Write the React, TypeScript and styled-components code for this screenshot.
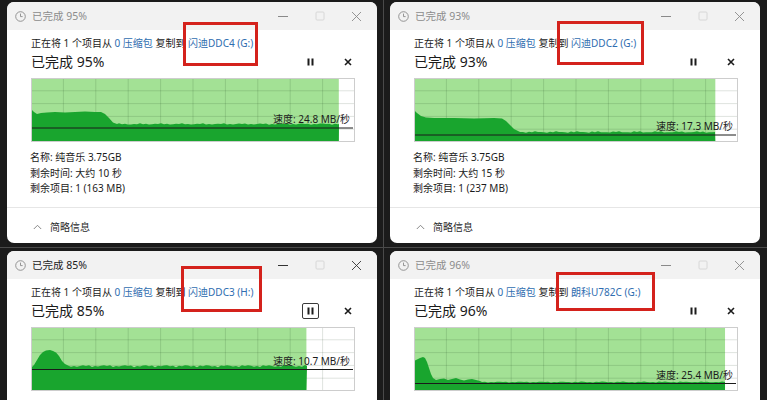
import React from "react";
import styled, { createGlobalStyle } from "styled-components";

type Pt = [number, number];

const GW = 324;
const GH = 64;

const GlobalStyle = createGlobalStyle`
  html, body { margin: 0; padding: 0; background: #1a1a1a; }
  body {
    width: 767px; height: 400px; overflow: hidden;
    font-family: "Noto Sans", "Noto Sans CJK SC", sans-serif;
    -webkit-font-smoothing: antialiased;
  }
`;

const Page = styled.div`
  display: grid;
  grid-template-columns: 370px 370px;
  grid-template-rows: 241px 149px;
  column-gap: 13px;
  row-gap: 8px;
  padding: 2px 0 0 7px;
  height: 400px;
  box-sizing: border-box;
  overflow: hidden;
  background:
    linear-gradient(#4a4a4a, #4a4a4a) 383px 0 / 1px 100% no-repeat,
    linear-gradient(#4a4a4a, #4a4a4a) 0 247px / 100% 1px no-repeat,
    #1b1b1b;
`;

const Window = styled.div<{ $cropped?: boolean }>`
  position: relative;
  display: flex;
  flex-direction: column;
  height: ${(p) => (p.$cropped ? "149px" : "241px")};
  background: #ffffff;
  border-radius: ${(p) => (p.$cropped ? "7px 7px 0 0" : "7px")};
  overflow: hidden;
`;

const TitleBar = styled.div`
  height: 28px;
  flex-shrink: 0;
  display: flex;
  align-items: center;
  padding-left: 8px;
  background: #f2f2f2;
`;

const TitleText = styled.span<{ $active?: boolean }>`
  margin-left: 6px;
  font-size: 10.5px;
  line-height: 14px;
  color: ${(p) => (p.$active ? "#1b1b1b" : "#8c8c8c")};
`;

const TitleControls = styled.div`
  margin-left: auto;
  display: flex;
  padding-right: 2px;
`;

const CtrlButton = styled.div`
  width: 37px;
  height: 28px;
  display: flex;
  align-items: center;
  justify-content: center;
`;

const Body = styled.div`
  display: flex;
  flex-direction: column;
  padding: 6px 22px 0 24px;
`;

const ContentLine = styled.div`
  font-size: 10px;
  line-height: 14px;
  color: #1b1b1b;
  white-space: nowrap;
`;

const Link = styled.span`
  color: #2f6db0;
`;

const BigRow = styled.div`
  display: flex;
  align-items: center;
  height: 20px;
  margin-top: 2px;
`;

const BigText = styled.span`
  font-size: 14px;
  line-height: 20px;
  color: #1b1b1b;
`;

const RowControls = styled.div`
  margin-left: auto;
  margin-right: -2px;
  display: flex;
  align-items: center;
  gap: 20px;
`;

const PauseButton = styled.div<{ $focused?: boolean }>`
  width: 17px;
  height: 16px;
  box-sizing: border-box;
  display: flex;
  align-items: center;
  justify-content: center;
  border: 1px solid ${(p) => (p.$focused ? "#3a3a3a" : "transparent")};
  border-radius: 2px;
`;

const StopButton = styled.div`
  width: 18px;
  height: 16px;
  display: flex;
  align-items: center;
  justify-content: center;
`;

const GraphFrame = styled.div`
  position: relative;
  width: ${GW}px;
  height: ${GH}px;
  margin-top: 6px;
`;

const SpeedLabel = styled.span<{ $top: number }>`
  position: absolute;
  right: 5px;
  top: ${(p) => p.$top}px;
  font-size: 10px;
  line-height: 14px;
  color: #1b1b1b;
  white-space: nowrap;
`;

const Info = styled.div`
  margin-top: 8px;
  margin-left: -1px;
  display: flex;
  flex-direction: column;
`;

const InfoLine = styled.div`
  font-size: 10px;
  line-height: 15.5px;
  color: #1b1b1b;
  white-space: nowrap;
`;

const Footer = styled.div`
  margin-top: auto;
  height: 36px;
  box-sizing: border-box;
  border-top: 1px solid #e6e6e6;
  display: flex;
  align-items: center;
  padding: 3px 0 0 26px;
`;

const FooterText = styled.span`
  margin-left: 8px;
  font-size: 10px;
  line-height: 14px;
  color: #2a2a2a;
`;

const Highlight = styled.div<{ $l: number; $t: number; $w: number; $h: number }>`
  position: absolute;
  left: ${(p) => p.$l}px;
  top: ${(p) => p.$t}px;
  width: ${(p) => p.$w}px;
  height: ${(p) => p.$h}px;
  box-sizing: border-box;
  border: 3px solid #d4221c;
  pointer-events: none;
`;

function wobble(from: number, to: number, base: number, amp: number, seed: number): Pt[] {
  const pts: Pt[] = [];
  for (let x = from; x <= to; x += 3) {
    const y =
      base +
      amp * (Math.sin(x * 0.9 + seed) * 0.55 + Math.sin(x * 0.31 + seed * 2.3) * 0.45);
    pts.push([x, y]);
  }
  pts.push([to, base]);
  return pts;
}

interface DialogData {
  percent: number;
  dest: string;
  speed: string;
  remainTime: string;
  remainItems: string;
  active?: boolean;
  pauseFocused?: boolean;
  cropped?: boolean;
  lineY: number;
  dark: Pt[];
  box: { l: number; t: number; w: number; h: number };
}

const dialogs: DialogData[] = [
  {
    percent: 95,
    dest: "闪迪DDC4 (G:)",
    speed: "24.8 MB/秒",
    remainTime: "大约 10 秒",
    remainItems: "1 (163 MB)",
    lineY: 50,
    dark: [
      [0, 31], [3, 34], [6, 36], [10, 35], [16, 34.5], [24, 34], [34, 34.5], [44, 34],
      [54, 33.5], [64, 34], [70, 34], [74, 36], [78, 40], [82, 44.5], [86, 46],
      ...wobble(88, 308, 46, 0.8, 1),
    ],
    box: { l: 176, t: 20, w: 75, h: 44 },
  },
  {
    percent: 93,
    dest: "闪迪DDC2 (G:)",
    speed: "17.3 MB/秒",
    remainTime: "大约 15 秒",
    remainItems: "1 (237 MB)",
    lineY: 57,
    dark: [
      [0, 32], [3, 35], [7, 38], [12, 39.5], [20, 40], [40, 40], [60, 40.5], [80, 40],
      [88, 40.5], [92, 43], [96, 47], [100, 51], [104, 53],
      ...wobble(106, 301, 54, 0.9, 2),
    ],
    box: { l: 167, t: 19, w: 87, h: 44 },
  },
  {
    percent: 85,
    dest: "闪迪DDC3 (H:)",
    speed: "10.7 MB/秒",
    remainTime: "",
    remainItems: "",
    active: true,
    pauseFocused: true,
    cropped: true,
    lineY: 42.5,
    dark: [
      [0, 41], [3, 38], [6, 33], [9, 28], [12, 25], [15, 23.5], [19, 23], [22, 24],
      [25, 25.5], [28, 29], [31, 34], [34, 37], [38, 39],
      ...wobble(40, 276, 39, 1.2, 3),
    ],
    box: { l: 174, t: 15, w: 81, h: 46 },
  },
  {
    percent: 96,
    dest: "朗科U782C (G:)",
    speed: "25.4 MB/秒",
    remainTime: "",
    remainItems: "",
    cropped: true,
    lineY: 56.5,
    dark: [
      [0, 34], [3, 32.5], [6, 31], [9, 30], [11, 31], [13, 35], [15, 41], [17, 47],
      [19, 51], [22, 53], [26, 52], [30, 51.5], [34, 53], [38, 52], [42, 51], [46, 52.5],
      [50, 53.5], [54, 52.5], [58, 52], [62, 53], [66, 54],
      ...wobble(68, 311, 55, 0.6, 4),
    ],
    box: { l: 166, t: 21, w: 99, h: 39 },
  },
];

const ClockIcon = () => (
  <svg width="11" height="11" viewBox="0 0 11 11">
    <circle cx="5.5" cy="5.5" r="4.8" fill="none" stroke="#8a8a8a" strokeWidth="0.9" />
    <path d="M5.5 2.6 V5.6 H7.6" fill="none" stroke="#8a8a8a" strokeWidth="0.9" />
  </svg>
);

const MinIcon = ({ color }: { color: string }) => (
  <svg width="10" height="10" viewBox="0 0 10 10">
    <line x1="0" y1="5.5" x2="10" y2="5.5" stroke={color} strokeWidth="1" />
  </svg>
);

const MaxIcon = () => (
  <svg width="10" height="10" viewBox="0 0 10 10">
    <rect x="1" y="1" width="8" height="8" rx="1" fill="none" stroke="#d4d4d4" strokeWidth="0.9" />
  </svg>
);

const CloseIcon = ({ color }: { color: string }) => (
  <svg width="11" height="11" viewBox="0 0 11 11">
    <path d="M1 1 L10 10 M10 1 L1 10" stroke={color} strokeWidth="0.9" />
  </svg>
);

const PauseIcon = () => (
  <svg width="7" height="8" viewBox="0 0 7 8">
    <rect x="0.5" y="0.5" width="2" height="7" fill="#1b1b1b" />
    <rect x="4.5" y="0.5" width="2" height="7" fill="#1b1b1b" />
  </svg>
);

const StopIcon = () => (
  <svg width="8" height="8" viewBox="0 0 8 8">
    <path d="M1 1 L7 7 M7 1 L1 7" stroke="#1b1b1b" strokeWidth="1.6" />
  </svg>
);

const ChevronUp = () => (
  <svg width="9" height="6" viewBox="0 0 9 6">
    <path d="M0.8 5 L4.5 1.3 L8.2 5" fill="none" stroke="#7a7a7a" strokeWidth="0.9" />
  </svg>
);

const SpeedGraph = ({ d }: { d: DialogData }) => {
  const fillW = (GW * d.percent) / 100;
  const cols = Array.from({ length: 9 }, (_, i) => (i + 1) * (GW / 10));
  const rows = Array.from({ length: 4 }, (_, i) => (i + 1) * (GH / 5));
  const area =
    `M0 ${GH} ` + d.dark.map(([x, y]) => `L${x.toFixed(1)} ${y.toFixed(2)}`).join(" ") + ` L${fillW} ${GH} Z`;
  return (
    <svg width={GW} height={GH} viewBox={`0 0 ${GW} ${GH}`} style={{ display: "block" }}>
      <rect x="0" y="0" width={GW} height={GH} fill="#ffffff" />
      <rect x="0" y="0" width={fillW} height={GH} fill="#a3e195" />
      {cols.map((x) => (
        <line key={`c${x}`} x1={x} y1="0" x2={x} y2={GH} stroke="rgba(0,40,0,0.13)" strokeWidth="1" />
      ))}
      {rows.map((y) => (
        <line key={`r${y}`} x1="0" y1={y} x2={GW} y2={y} stroke="rgba(0,40,0,0.13)" strokeWidth="1" />
      ))}
      <path d={area} fill="#19a52e" />
      <line x1="1" y1={d.lineY} x2={GW - 2} y2={d.lineY} stroke="#1a1a1a" strokeWidth="1" />
      <rect x="0.5" y="0.5" width={GW - 1} height={GH - 1} fill="none" stroke="#cdcdcd" strokeWidth="1" />
    </svg>
  );
};

const CopyDialog = ({ d }: { d: DialogData }) => {
  const ctrlColor = d.active ? "#333333" : "#8a8a8a";
  return (
    <Window $cropped={d.cropped}>
      <TitleBar>
        <ClockIcon />
        <TitleText $active={d.active}>已完成 {d.percent}%</TitleText>
        <TitleControls>
          <CtrlButton>
            <MinIcon color={ctrlColor} />
          </CtrlButton>
          <CtrlButton>
            <MaxIcon />
          </CtrlButton>
          <CtrlButton>
            <CloseIcon color={ctrlColor} />
          </CtrlButton>
        </TitleControls>
      </TitleBar>
      <Body>
        <ContentLine>
          正在将 1 个项目从 <Link>0 压缩包</Link> 复制到 <Link>{d.dest}</Link>
        </ContentLine>
        <BigRow>
          <BigText>已完成 {d.percent}%</BigText>
          <RowControls>
            <PauseButton $focused={d.pauseFocused}>
              <PauseIcon />
            </PauseButton>
            <StopButton>
              <StopIcon />
            </StopButton>
          </RowControls>
        </BigRow>
        <GraphFrame>
          <SpeedGraph d={d} />
          <SpeedLabel $top={d.lineY - 16}>速度: {d.speed}</SpeedLabel>
        </GraphFrame>
        {!d.cropped && (
          <Info>
            <InfoLine>名称: 纯音乐 3.75GB</InfoLine>
            <InfoLine>剩余时间: {d.remainTime}</InfoLine>
            <InfoLine>剩余项目: {d.remainItems}</InfoLine>
          </Info>
        )}
      </Body>
      {!d.cropped && (
        <Footer>
          <ChevronUp />
          <FooterText>简略信息</FooterText>
        </Footer>
      )}
      <Highlight $l={d.box.l} $t={d.box.t} $w={d.box.w} $h={d.box.h} />
    </Window>
  );
};

export default function App() {
  return (
    <>
      <GlobalStyle />
      <Page>
        {dialogs.map((d) => (
          <CopyDialog key={d.dest} d={d} />
        ))}
      </Page>
    </>
  );
}
